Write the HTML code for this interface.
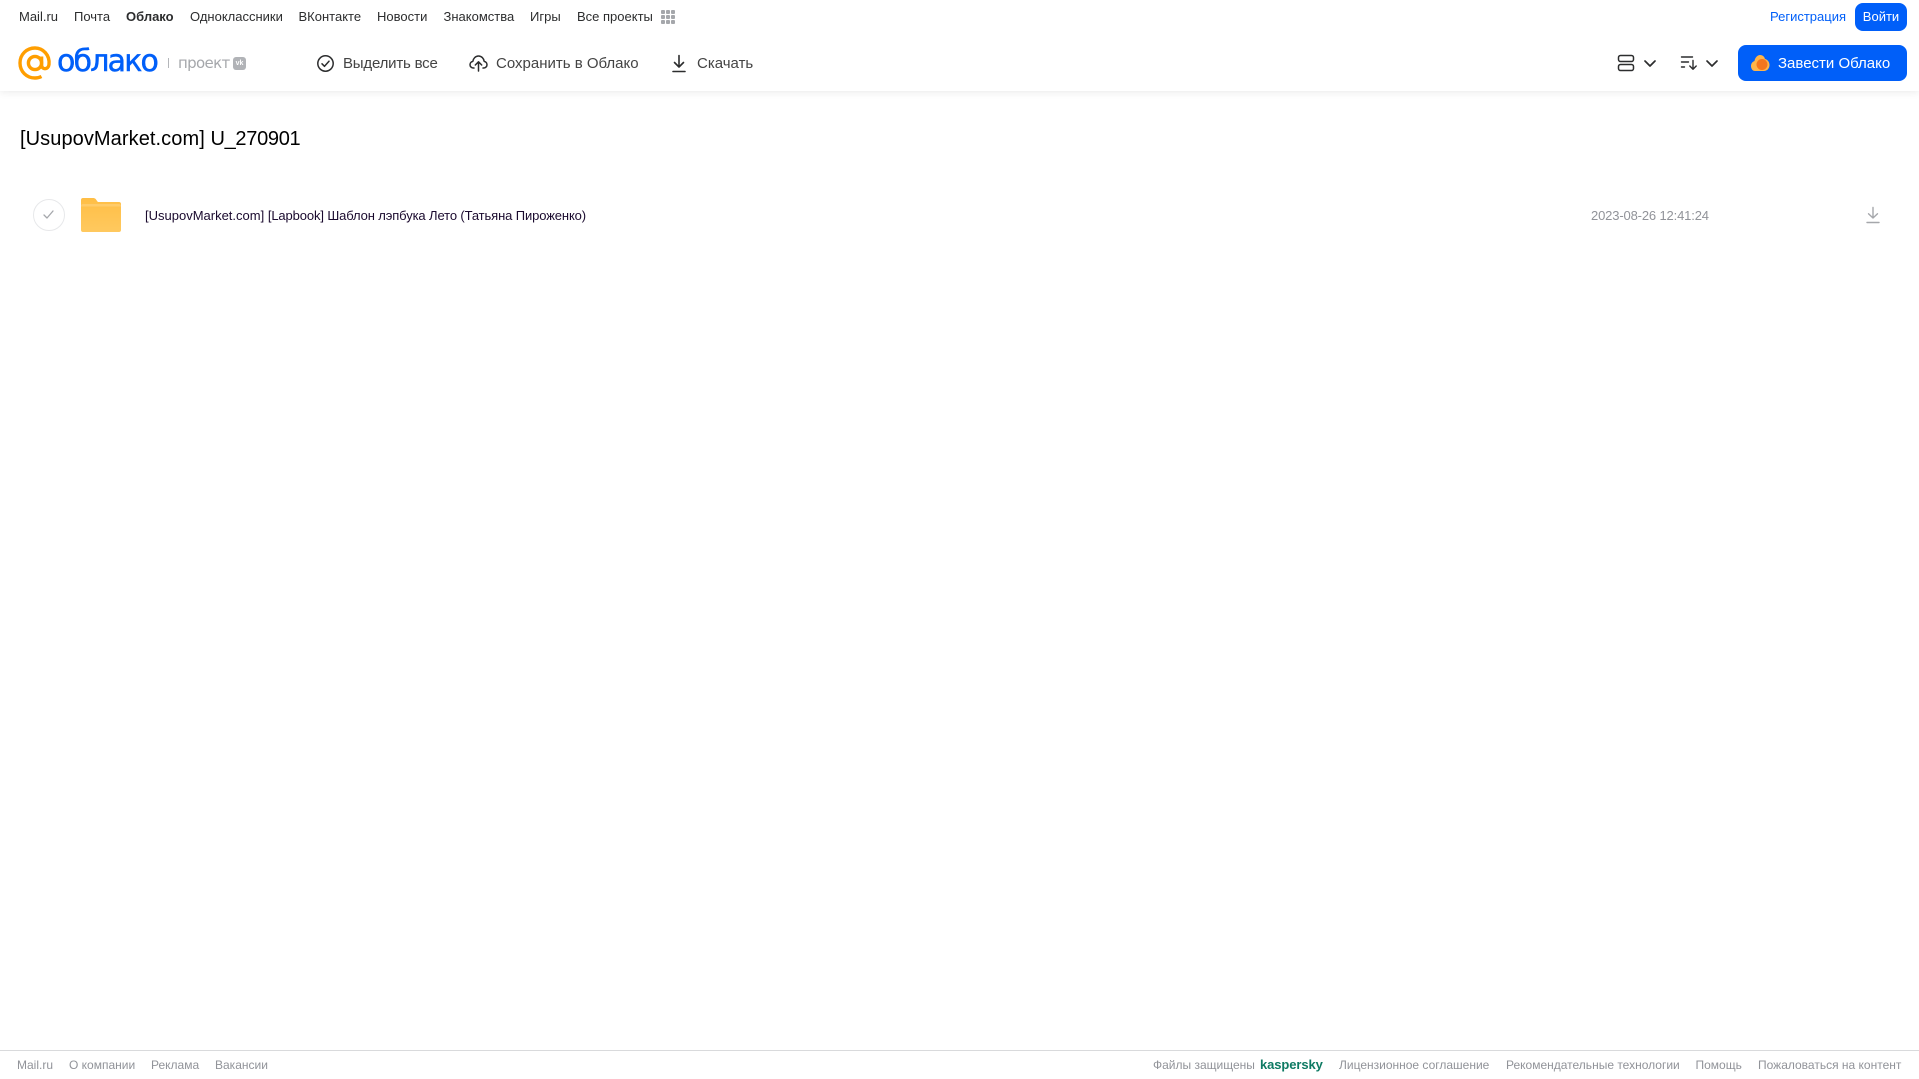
<!DOCTYPE html>
<html lang="ru"><head><meta charset="utf-8"><title>Облако</title>
<style>
html,body{margin:0;padding:0;background:#fff}
body{position:relative;width:1919px;height:1079px;overflow:hidden;font-family:"Liberation Sans",sans-serif}
.t{position:absolute;white-space:nowrap;line-height:20px}
.n{top:7px;font-size:13px;color:#2c2d2e}
.b{top:53.500px;font-size:15px;color:#444}
.f{top:1055px;font-size:12px;color:#919399}
svg{position:absolute;display:block}
</style></head><body>
<div style="position:absolute;left:0;top:0;width:1919px;height:91px;background:#fff;box-shadow:0 1px 8px rgba(0,0,0,.09)"></div>

<span class="t n" style="left:19px">Mail.ru</span>
<span class="t n" style="left:74px">Почта</span>
<span class="t n" style="left:126px;font-weight:bold">Облако</span>
<span class="t n" style="left:190px">Одноклассники</span>
<span class="t n" style="left:298.500px">ВКонтакте</span>
<span class="t n" style="left:377px">Новости</span>
<span class="t n" style="left:443.500px">Знакомства</span>
<span class="t n" style="left:530px">Игры</span>
<span class="t n" style="left:577px">Все проекты</span>
<svg style="left:660px;top:9px" width="16" height="16" fill="#a5a7ab"><rect x="1" y="1" width="4" height="4" rx="1"/><rect x="6" y="1" width="4" height="4" rx="1"/><rect x="11" y="1" width="4" height="4" rx="1"/><rect x="1" y="6" width="4" height="4" rx="1"/><rect x="6" y="6" width="4" height="4" rx="1"/><rect x="11" y="6" width="4" height="4" rx="1"/><rect x="1" y="11" width="4" height="4" rx="1"/><rect x="6" y="11" width="4" height="4" rx="1"/><rect x="11" y="11" width="4" height="4" rx="1"/></svg>

<span class="t n" style="left:1770px;color:#005ff9">Регистрация</span>
<div style="position:absolute;left:1855px;top:3px;width:52px;height:28px;background:#005ff9;border-radius:8px;color:#fff;font-size:13px;line-height:28px;text-align:center">Войти</div>

<svg style="left:18px;top:46px" width="34" height="34" viewBox="0 0 34 34" fill="none" stroke="#ff9e00" stroke-width="3.400"><circle cx="17" cy="17" r="6.600"/><path d="M23.600 10.500V19c0 5 6.700 5 7.400-.5C32 9 25 2 17 2 8.500 2 2 8.500 2 17s6.500 15 15 15c2.500 0 4.500-.5 6.500-1.500"/></svg>
<span class="t" style="left:57px;top:45px;font-size:30px;line-height:34px;color:#005ff9;font-family:'DejaVu Sans',sans-serif;font-weight:500;letter-spacing:-1.800px;-webkit-text-stroke:.5px #005ff9">облако</span>
<div style="position:absolute;left:168px;top:58px;width:1px;height:10px;background:#b4b6ba"></div>
<span class="t" style="left:178px;top:53px;font-size:15px;color:#a5a7ab;font-family:'DejaVu Sans',sans-serif;letter-spacing:-.65px">проект</span>
<div style="position:absolute;left:233px;top:57px;width:13px;height:13px;background:#b1b3b7;border-radius:3px;color:#fff;font-size:7px;line-height:13px;text-align:center;font-weight:bold">vk</div>

<svg style="left:315.500px;top:53.500px" width="19" height="19" viewBox="0 0 19 19" fill="none" stroke="#2c2d2e" stroke-width="1.500"><circle cx="9.500" cy="9.500" r="7.700"/><path d="M6 9.800l2.500 2.500L13 7.200" stroke-linecap="round" stroke-linejoin="round"/></svg>
<span class="t b" style="left:343px;letter-spacing:-.2px">Выделить все</span>
<svg style="left:469px;top:53px" width="19" height="19" viewBox="0 0 19 19" fill="none" stroke="#2c2d2e" stroke-width="1.500" stroke-linecap="round" stroke-linejoin="round"><path d="M5 15H4.500C2.500 15 1 13.500 1 11.700c0-1.700 1.200-3 2.800-3.300C4.200 5.500 6.500 3 9.500 3c3 0 5.300 2.400 5.700 5.400 1.600.3 2.800 1.600 2.800 3.300 0 1.800-1.500 3.300-3.500 3.300H14"/><path d="M9.500 18V9M6.300 12l3.200-3.200 3.200 3.200"/></svg>
<span class="t b" style="left:496px">Сохранить в Облако</span>
<svg style="left:670px;top:53.500px" width="18" height="19" viewBox="0 0 18 19" fill="none" stroke="#2c2d2e" stroke-width="1.600" stroke-linecap="round" stroke-linejoin="round"><path d="M9 1.500V13M4.500 8.500L9 13l4.500-4.500M3 17.500h12"/></svg>
<span class="t b" style="left:697px">Скачать</span>

<svg style="left:1617px;top:54px" width="18" height="18" viewBox="0 0 18 18" fill="none" stroke="#2c2d2e" stroke-width="1.500"><rect x="1.500" y="1.500" width="15" height="6" rx="2"/><rect x="1.500" y="10.500" width="15" height="6" rx="2"/></svg>
<svg style="left:1643px;top:59px" width="14" height="9" viewBox="0 0 14 9" fill="none" stroke="#2c2d2e" stroke-width="1.700" stroke-linecap="round" stroke-linejoin="round"><path d="M2 2l5 5 5-5"/></svg>
<svg style="left:1680px;top:55px" width="18" height="16" viewBox="0 0 18 16" fill="none" stroke="#2c2d2e" stroke-width="1.400" stroke-linecap="round" stroke-linejoin="round"><path d="M1.500 2h11M1.500 7h7M1.500 12h3M13 5.500V14M9.800 11l3.200 3.200 3.200-3.200"/></svg>
<svg style="left:1705px;top:59px" width="14" height="9" viewBox="0 0 14 9" fill="none" stroke="#2c2d2e" stroke-width="1.700" stroke-linecap="round" stroke-linejoin="round"><path d="M2 2l5 5 5-5"/></svg>

<div style="position:absolute;left:1738px;top:45px;width:169px;height:36px;background:#005ff9;border-radius:8px"></div>
<svg style="left:1750px;top:54px" width="20" height="18" viewBox="0 0 20 18"><path d="M1 12c0-3 2-4.500 3.500-5C5 3.500 7.500 1 10 1c3 0 4.500 2 5 4 2.500.5 4.500 3 4.500 6 0 3.500-2.500 6-5.500 6H5c-2.500 0-4-2.500-4-5z" fill="#ffb54a"/><circle cx="12" cy="10.500" r="5.500" fill="#f4761f"/></svg>
<span class="t" style="left:1778px;top:53.500px;font-size:15px;color:#fff">Завести Облако</span>

<span class="t" style="left:20px;top:125px;font-size:20px;line-height:28px;color:#000"><span style="letter-spacing:.08px">[UsupovMarket.com] </span><span style="letter-spacing:-.3px">U_270901</span></span>

<div style="position:absolute;left:33px;top:199px;width:30px;height:30px;border:1px solid #e7e8ea;border-radius:50%"></div>
<svg style="left:42px;top:209px" width="13" height="11" viewBox="0 0 13 11" fill="none" stroke="#a5a7ab" stroke-width="1.300" stroke-linecap="round" stroke-linejoin="round"><path d="M2 6l3 3 6-7"/></svg>

<svg style="left:81px;top:198px" width="40" height="34" viewBox="0 0 40 34"><defs><linearGradient id="g" x1="0" y1="0" x2="0" y2="1"><stop offset="0" stop-color="#ffbe45"/><stop offset="1" stop-color="#ffc95f"/></linearGradient></defs><path d="M2 0h10c2 0 3 1 4 3l1 1h21c1.200 0 2 .8 2 2v26c0 1.200-.8 2-2 2H2c-1.200 0-2-.8-2-2V2C0 .8.800 0 2 0z" fill="url(#g)"/><path d="M0 8c0-1.200.8-2 2-2h36c1.200 0 2 .8 2 2v.5H0z" fill="#ffd077" opacity=".7"/></svg>

<span class="t" style="left:145px;top:206px;font-size:13px;color:#1a0a2e"><span>[UsupovMarket.com] </span><span style="letter-spacing:-.12px">[Lapbook] Шаблон лэпбука Лето (Татьяна Пироженко)</span></span>
<span class="t" style="left:1591px;top:206px;font-size:13px;color:#919399;letter-spacing:-.15px">2023-08-26 12:41:24</span>
<svg style="left:1865px;top:206px" width="16" height="18" viewBox="0 0 16 18" fill="none" stroke="#a5a7ab" stroke-width="1.400" stroke-linecap="round" stroke-linejoin="round"><path d="M8 1.500V12M3.500 7.800L8 12l4.500-4.200M2 16.500h12"/></svg>

<div style="position:absolute;left:0;top:1050px;width:1919px;height:1px;background:#d9dadc"></div>
<span class="t f" style="left:17px">Mail.ru</span>
<span class="t f" style="left:69px">О компании</span>
<span class="t f" style="left:151px">Реклама</span>
<span class="t f" style="left:215px">Вакансии</span>
<span class="t f" style="left:1153px">Файлы защищены</span>
<span class="t f" style="left:1260px;color:#0e7a63;font-weight:bold;font-size:13px;letter-spacing:-.1px">kaspersky</span>
<span class="t f" style="left:1339px">Лицензионное соглашение</span>
<span class="t f" style="left:1506px">Рекомендательные технологии</span>
<span class="t f" style="left:1695.500px">Помощь</span>
<span class="t f" style="left:1758px">Пожаловаться на контент</span>
</body></html>
